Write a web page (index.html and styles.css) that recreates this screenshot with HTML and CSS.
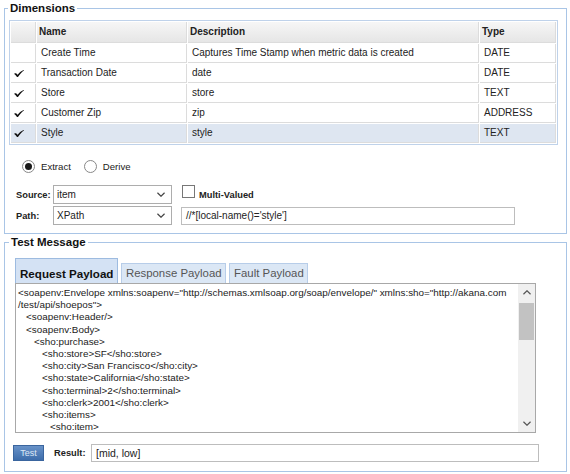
FILE: index.html
```html
<!DOCTYPE html>
<html>
<head>
<meta charset="utf-8">
<link rel="stylesheet" href="styles.css">
</head>
<body>
<div class="page">
  <fieldset class="group dims">
    <legend class="legend">Dimensions</legend>
    <table class="grid">
      <colgroup>
        <col class="c-check"><col class="c-name"><col class="c-desc"><col class="c-type">
      </colgroup>
      <thead>
        <tr><th></th><th>Name</th><th>Description</th><th>Type</th></tr>
      </thead>
      <tbody>
        <tr><td></td><td>Create Time</td><td>Captures Time Stamp when metric data is created</td><td>DATE</td></tr>
        <tr><td class="chk"><svg class="tick" viewBox="0 0 10 7"><path d="M0 3.8 C0.8 3 1.8 3 2.4 3.6 L3.6 4.8 C5 3 7 1 9.6 0 L10 0.4 C7.6 2 5.6 4.4 4 7 L3 7 C2.2 5.6 1.2 4.6 0 3.8 Z"/></svg></td><td>Transaction Date</td><td>date</td><td>DATE</td></tr>
        <tr><td class="chk"><svg class="tick" viewBox="0 0 10 7"><path d="M0 3.8 C0.8 3 1.8 3 2.4 3.6 L3.6 4.8 C5 3 7 1 9.6 0 L10 0.4 C7.6 2 5.6 4.4 4 7 L3 7 C2.2 5.6 1.2 4.6 0 3.8 Z"/></svg></td><td>Store</td><td>store</td><td>TEXT</td></tr>
        <tr><td class="chk"><svg class="tick" viewBox="0 0 10 7"><path d="M0 3.8 C0.8 3 1.8 3 2.4 3.6 L3.6 4.8 C5 3 7 1 9.6 0 L10 0.4 C7.6 2 5.6 4.4 4 7 L3 7 C2.2 5.6 1.2 4.6 0 3.8 Z"/></svg></td><td>Customer Zip</td><td>zip</td><td>ADDRESS</td></tr>
        <tr class="selected"><td class="chk"><svg class="tick" viewBox="0 0 10 7"><path d="M0 3.8 C0.8 3 1.8 3 2.4 3.6 L3.6 4.8 C5 3 7 1 9.6 0 L10 0.4 C7.6 2 5.6 4.4 4 7 L3 7 C2.2 5.6 1.2 4.6 0 3.8 Z"/></svg></td><td>Style</td><td>style</td><td>TEXT</td></tr>
      </tbody>
    </table>

    <div class="mode">
      <span class="radio checked"></span><span class="radio-label">Extract</span>
      <span class="radio"></span><span class="radio-label">Derive</span>
    </div>

    <div class="form-row source">
      <span class="field-label">Source:</span>
      <div class="select"><span>item</span><svg class="chev" viewBox="0 0 9 5"><path d="M0.5 0.5 L4.5 4.5 L8.5 0.5"/></svg></div>
      <span class="checkbox"></span>
      <span class="field-label strong">Multi-Valued</span>
    </div>

    <div class="form-row path">
      <span class="field-label">Path:</span>
      <div class="select"><span>XPath</span><svg class="chev" viewBox="0 0 9 5"><path d="M0.5 0.5 L4.5 4.5 L8.5 0.5"/></svg></div>
      <div class="text-input path-input">//*[local-name()='style']</div>
    </div>
  </fieldset>

  <fieldset class="group test">
    <legend class="legend">Test Message</legend>
    <div class="tabs">
      <div class="tab active">Request Payload</div>
      <div class="tab">Response Payload</div>
      <div class="tab">Fault Payload</div>
    </div>
    <div class="payload">
      <div class="code">
        <div class="ln">&lt;soapenv:Envelope xmlns:soapenv="http://schemas.xmlsoap.org/soap/envelope/" xmlns:sho="http://akana.com</div>
        <div class="ln">/test/api/shoepos"&gt;</div>
        <div class="ln l1">&lt;soapenv:Header/&gt;</div>
        <div class="ln l1">&lt;soapenv:Body&gt;</div>
        <div class="ln l2">&lt;sho:purchase&gt;</div>
        <div class="ln l3">&lt;sho:store&gt;SF&lt;/sho:store&gt;</div>
        <div class="ln l3">&lt;sho:city&gt;San Francisco&lt;/sho:city&gt;</div>
        <div class="ln l3">&lt;sho:state&gt;California&lt;/sho:state&gt;</div>
        <div class="ln l3">&lt;sho:terminal&gt;2&lt;/sho:terminal&gt;</div>
        <div class="ln l3">&lt;sho:clerk&gt;2001&lt;/sho:clerk&gt;</div>
        <div class="ln l3">&lt;sho:items&gt;</div>
        <div class="ln l4">&lt;sho:item&gt;</div>
      </div>
      <div class="scrollbar">
        <div class="arrow"><svg viewBox="0 0 9 5"><path d="M0.5 4.5 L4.5 0.5 L8.5 4.5"/></svg></div>
        <div class="track"><div class="thumb"></div></div>
        <div class="arrow"><svg viewBox="0 0 9 5"><path d="M0.5 0.5 L4.5 4.5 L8.5 0.5"/></svg></div>
      </div>
    </div>
    <div class="result-row">
      <div class="btn">Test</div>
      <span class="field-label result-label">Result:</span>
      <div class="text-input result-input">[mid, low]</div>
    </div>
  </fieldset>
</div>
</body>
</html>
```

FILE: styles.css
```css
* { box-sizing: border-box; }

body {
  margin: 0;
  background: #fff;
  color: #222;
  font-family: "Liberation Sans", Arial, sans-serif;
}

.page {
  padding: 0 3px 0 4px;
}

.group {
  margin: 0;
  min-width: 0;
  border: 1px solid #a9c5e6;
}

.dims { padding: 4px 7px 8px 4px; }
.test { padding: 8px 26px 9px 9px; }

.legend {
  font-size: 11.5px;
  font-weight: bold;
  line-height: 16px;
  color: #111;
  padding: 0 2px;
}
.dims .legend { margin-left: -1px; }
.test .legend { margin-left: -5px; }

/* table */
.grid {
  width: 549px;
  border: 1px solid #bfd2ea;
  border-spacing: 1px;
  font-size: 10px;
  color: #222;
}
.c-check { width: 25px; }
.c-name { width: 150px; }
.c-desc { width: 291px; }
.c-type { width: 76px; }

.grid th, .grid td {
  padding: 2px 3px 2px 4px;
  line-height: 14px;
  text-align: left;
  white-space: nowrap;
  border-right: 1px solid #dcdcdc;
  border-bottom: 1px solid #dcdcdc;
  background: #fff;
}
.grid th {
  padding: 3px 3px 3px 2px;
  font-weight: bold;
  background: linear-gradient(#f6f6f6, #e6e6e6);
}
.grid tr.selected td { background: #dee6f1; }
.grid td.chk { padding-left: 3px; }

.tick {
  display: block;
  width: 10px;
  height: 7px;
  fill: #111;
}

/* radios */
.mode {
  display: flex;
  align-items: center;
  height: 13px;
  margin: 15px 0 0 13px;
  font-size: 9.6px;
  color: #222;
}
.radio {
  width: 13px;
  height: 13px;
  border: 1px solid #888;
  border-radius: 50%;
  background: #fff;
  display: flex;
  align-items: center;
  justify-content: center;
  margin-right: 6px;
}
.radio.checked::after {
  content: "";
  width: 7px;
  height: 7px;
  border-radius: 50%;
  background: #1a1a1a;
}
.radio-label { margin-right: 13px; }

/* form rows */
.form-row {
  display: flex;
  align-items: center;
  margin-left: 7px;
  height: 19px;
}
.source { margin-top: 12px; }
.path { margin-top: 2px; }

.field-label {
  font-size: 9.3px;
  font-weight: bold;
  color: #222;
  width: 37px;
}
.field-label.strong { width: auto; margin-left: 4px; }

.select {
  width: 119px;
  height: 19px;
  border: 1px solid #adadad;
  background: #fff;
  display: flex;
  align-items: center;
  justify-content: space-between;
  padding: 0 6px 0 3px;
  font-size: 10px;
  color: #222;
}
.chev {
  width: 8px;
  height: 5px;
  fill: none;
  stroke: #444;
  stroke-width: 1.3;
}

.checkbox {
  width: 13px;
  height: 13px;
  border: 1px solid #777;
  background: #fff;
  margin-left: 10px;
  align-self: flex-start;
}

.text-input {
  height: 18px;
  border: 1px solid #bdbdbd;
  background: #fff;
  font-size: 10px;
  line-height: 16px;
  padding: 0 4px;
  color: #222;
}
.path-input {
  width: 334px;
  margin-left: 9px;
}

/* tabs */
.tabs {
  display: flex;
  align-items: flex-end;
  gap: 3px;
  margin-left: 1px;
  height: 25px;
}
.tab {
  height: 20px;
  padding: 0 3.5px 0 4px;
  font-size: 11.4px;
  line-height: 19px;
  color: #555;
  background: #dbe7f5;
  border: 1px solid #b7cde9;
  border-bottom: none;
}
.tab.active {
  height: 25px;
  padding: 5px 3.5px 0 4px;
  font-size: 11.6px;
  font-weight: bold;
  color: #111;
  background: #d4e2f4;
  border-color: #9dbbe0;
}

/* payload */
.payload {
  display: flex;
  width: 521px;
  height: 150px;
  margin-left: 1px;
  border: 1px solid #a8a8a8;
  background: #fff;
}
.code {
  flex: 1;
  overflow: hidden;
  padding: 3px 2px;
  font-size: 9.9px;
  line-height: 12.2px;
  color: #222;
  white-space: nowrap;
}
.l1 { padding-left: 8px; }
.l2 { padding-left: 16px; }
.l3 { padding-left: 24px; }
.l4 { padding-left: 32px; }

.scrollbar {
  width: 17px;
  display: flex;
  flex-direction: column;
  background: #f0f0f0;
}
.arrow {
  height: 17px;
  display: flex;
  align-items: center;
  justify-content: center;
}
.arrow svg {
  width: 8px;
  height: 5px;
  fill: none;
  stroke: #555;
  stroke-width: 1.3;
}
.track {
  flex: 1;
  padding: 2px 1px 0;
}
.thumb {
  height: 37px;
  background: #c2c2c2;
}

/* result */
.result-row {
  display: flex;
  align-items: center;
  height: 18px;
  margin-top: 11px;
}
.btn {
  width: 31px;
  height: 16px;
  margin-left: -1px;
  background: linear-gradient(#6892c8, #3d6dab);
  border: 1px solid #3a659e;
  color: #dbe6f5;
  font-size: 9px;
  line-height: 14px;
  text-align: center;
}
.result-label {
  width: 37px;
  margin-left: 10px;
}
.result-input {
  width: 448px;
  font-size: 10.5px;
}
```
